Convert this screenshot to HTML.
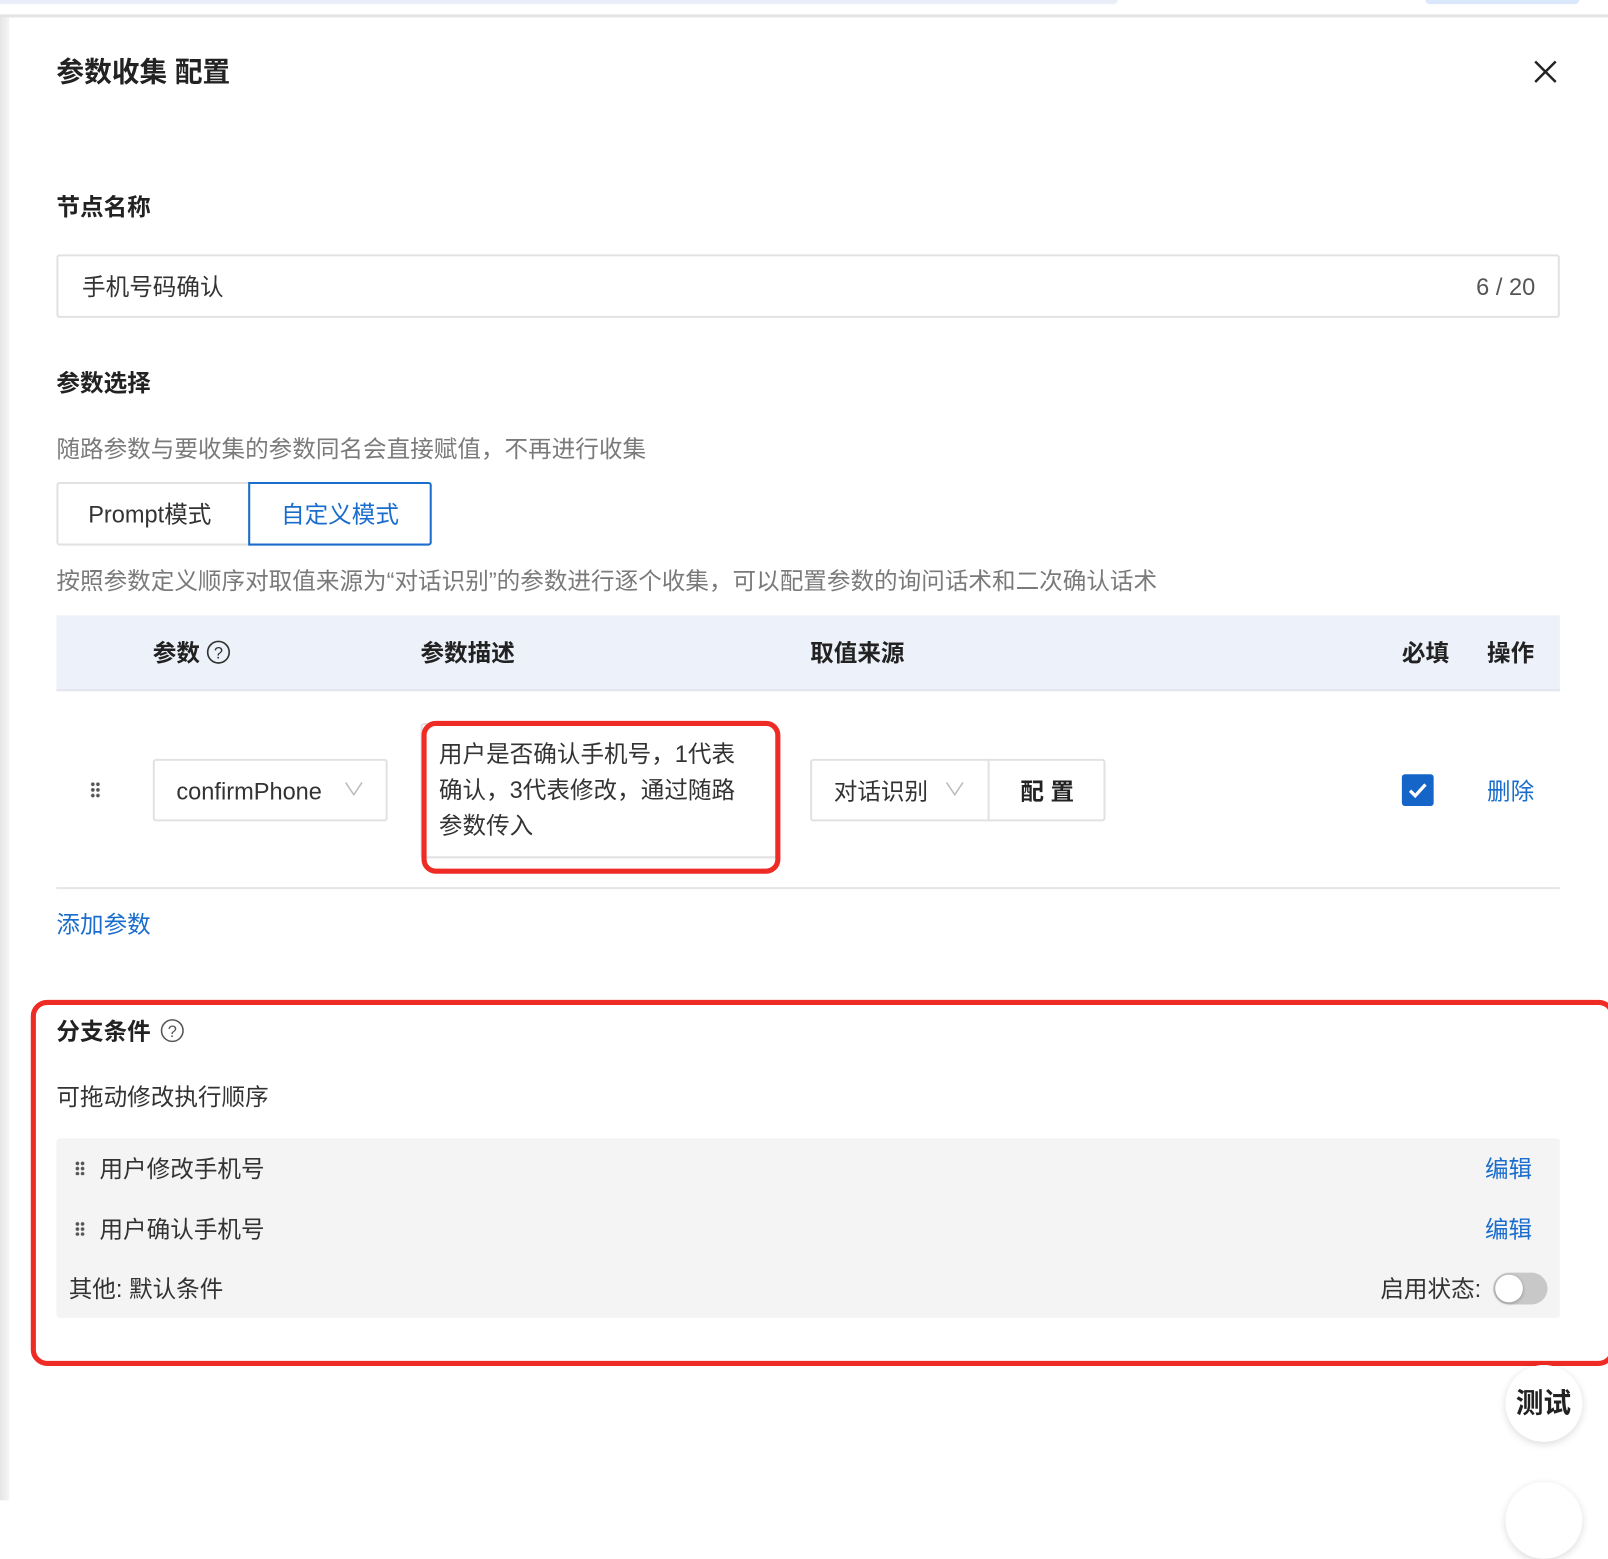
<!DOCTYPE html>
<html><head><meta charset="utf-8"><style>
*{margin:0;padding:0;box-sizing:border-box}
html,body{width:1608px;height:1500px;overflow:hidden;background:#fff}
#w{position:absolute;left:0;top:0;width:1568px;height:1463px;transform:scale(1.02551);transform-origin:0 0;font-family:"Liberation Sans","Noto Sans CJK SC",sans-serif;color:#333;font-size:23px}
.a{position:absolute;white-space:nowrap;line-height:1}
.c{transform:translateY(-50%)}
.b{font-weight:600;color:#222}
.g{color:#7a7a7a}
.bl{color:#1a6dcc}
.box{position:absolute;border:2px solid #e2e2e2;border-radius:3px;background:#fff}
.dr{position:absolute;width:10px;height:16px;background:radial-gradient(circle,#555 1.6px,transparent 2px) 0 0/5px 5.5px}
</style></head><body><div id="w">
<div style="position:absolute;left:0;top:0;width:1090px;height:4px;background:#e9eef8;border-radius:0 0 4px 0"></div>
<div style="position:absolute;left:1390px;top:0;width:150px;height:4px;background:#dbe7fb;border-radius:0 0 8px 8px"></div>
<div style="position:absolute;left:0;top:14px;width:1568px;height:3px;background:#e4e4e4"></div>
<div style="position:absolute;left:0;top:17px;width:9px;height:1446px;background:linear-gradient(90deg,#e6e6e6,#f4f4f4)"></div>

<div class="a c b" style="left:55px;top:71px;font-size:27px">参数收集 配置</div>
<svg style="position:absolute;left:1495px;top:58px" width="24" height="24"><path d="M2 2L22 22M22 2L2 22" stroke="#222" stroke-width="2.4"/></svg>

<div class="a c b" style="left:55px;top:202px">节点名称</div>
<div class="box" style="left:55px;top:248px;width:1466px;height:62px"></div>
<div class="a c" style="left:80px;top:280px">手机号码确认</div>
<div class="a c" style="right:71px;top:280px;color:#555">6 / 20</div>

<div class="a c b" style="left:55px;top:374px">参数选择</div>
<div class="a c g" style="left:55px;top:438px">随路参数与要收集的参数同名会直接赋值，不再进行收集</div>
<div class="box" style="left:55px;top:470px;width:189px;height:62px;border-radius:3px 0 0 3px"></div>
<div class="a c" style="left:86px;top:502px">Prompt模式</div>
<div class="box" style="left:242px;top:470px;width:179px;height:62px;border-color:#1a6dcc;border-radius:0 3px 3px 0"></div>
<div class="a c bl" style="left:274px;top:502px">自定义模式</div>
<div class="a c g" style="left:55px;top:567px">按照参数定义顺序对取值来源为“对话识别”的参数进行逐个收集，可以配置参数的询问话术和二次确认话术</div>

<div style="position:absolute;left:55px;top:600px;width:1466px;height:74px;background:#edf1f9;border-bottom:2px solid #e3e6ea"></div>
<div class="a c b" style="left:149px;top:637px">参数</div>
<svg style="position:absolute;left:201px;top:624px" width="24" height="24"><circle cx="12" cy="12" r="10.5" fill="none" stroke="#333" stroke-width="1.6"/><text x="12" y="18" font-size="16" text-anchor="middle" fill="#333" font-family="Liberation Sans">?</text></svg>
<div class="a c b" style="left:410px;top:637px">参数描述</div>
<div class="a c b" style="left:790px;top:637px">取值来源</div>
<div class="a c b" style="left:1367px;top:637px">必填</div>
<div class="a c b" style="left:1450px;top:637px">操作</div>

<div class="dr" style="left:88px;top:762px"></div>
<div class="box" style="left:149px;top:740px;width:229px;height:61px"></div>
<div class="a c" style="left:172px;top:772px;color:#333">confirmPhone</div>
<svg style="position:absolute;left:336px;top:762px" width="18" height="14"><path d="M1 1L9 13L17 1" fill="none" stroke="#bbb" stroke-width="1.5"/></svg>
<div class="box" style="left:410px;top:705px;width:348px;height:132px"></div>
<div style="position:absolute;left:411px;top:703px;width:350px;height:149px;border:5px solid #ee2b24;border-radius:14px"></div>
<div class="a" style="left:428px;top:718px;line-height:35px;white-space:normal;width:320px">用户是否确认手机号，1代表<br>确认，3代表修改，通过随路<br>参数传入</div>

<div class="box" style="left:790px;top:740px;width:288px;height:61px"></div>
<div style="position:absolute;left:963px;top:740px;width:2px;height:61px;background:#e2e2e2"></div>
<div class="a c" style="left:813px;top:772px">对话识别</div>
<svg style="position:absolute;left:922px;top:762px" width="18" height="14"><path d="M1 1L9 13L17 1" fill="none" stroke="#bbb" stroke-width="1.5"/></svg>
<div class="a c b" style="left:995px;top:772px">配 置</div>
<div style="position:absolute;left:1367px;top:755px;width:31px;height:31px;background:#1565c9;border-radius:3px"></div>
<svg style="position:absolute;left:1367px;top:755px" width="31" height="31"><path d="M8 16L13 21L23 10" fill="none" stroke="#fff" stroke-width="3.2"/></svg>
<div class="a c bl" style="left:1450px;top:772px">删除</div>
<div style="position:absolute;left:55px;top:865px;width:1466px;height:2px;background:#e6e6e6"></div>
<div class="a c bl" style="left:55px;top:902px">添加参数</div>

<div style="position:absolute;left:30px;top:975px;width:1545px;height:357px;border:5px solid #ee2b24;border-radius:16px"></div>
<div class="a c b" style="left:55px;top:1006px">分支条件</div>
<svg style="position:absolute;left:156px;top:993px" width="24" height="24"><circle cx="12" cy="12" r="10.5" fill="none" stroke="#555" stroke-width="1.5"/><text x="12" y="18" font-size="16" text-anchor="middle" fill="#555" font-family="Liberation Sans">?</text></svg>
<div class="a c" style="left:55px;top:1070px">可拖动修改执行顺序</div>
<div style="position:absolute;left:55px;top:1110px;width:1466px;height:175px;background:#f4f4f4;border-radius:3px"></div>
<div class="dr" style="left:73px;top:1132px;height:14px;background-size:5px 5px"></div>
<div class="a c" style="left:97px;top:1140px">用户修改手机号</div>
<div class="a c bl" style="left:1448px;top:1140px">编辑</div>
<div class="dr" style="left:73px;top:1191px;height:14px;background-size:5px 5px"></div>
<div class="a c" style="left:97px;top:1199px">用户确认手机号</div>
<div class="a c bl" style="left:1448px;top:1199px">编辑</div>
<div class="a c" style="left:67px;top:1257px">其他: 默认条件</div>
<div class="a c" style="left:1346px;top:1257px">启用状态:</div>
<div style="position:absolute;left:1456px;top:1241px;width:53px;height:31px;background:#c8c8c8;border-radius:16px"></div>
<div style="position:absolute;left:1458px;top:1243px;width:27px;height:27px;background:#fff;border-radius:50%;box-shadow:0 1px 3px rgba(0,0,0,.3)"></div>

<div style="position:absolute;left:1468px;top:1331px;width:75px;height:75px;border-radius:50%;background:#fff;box-shadow:0 2px 8px rgba(0,0,0,.15)"></div>
<div class="a c b" style="left:1478px;top:1369px;font-size:27px">测试</div>
<div style="position:absolute;left:1468px;top:1445px;width:75px;height:75px;border-radius:50%;background:#fff;box-shadow:0 2px 8px rgba(0,0,0,.15)"></div>
</div></body></html>
